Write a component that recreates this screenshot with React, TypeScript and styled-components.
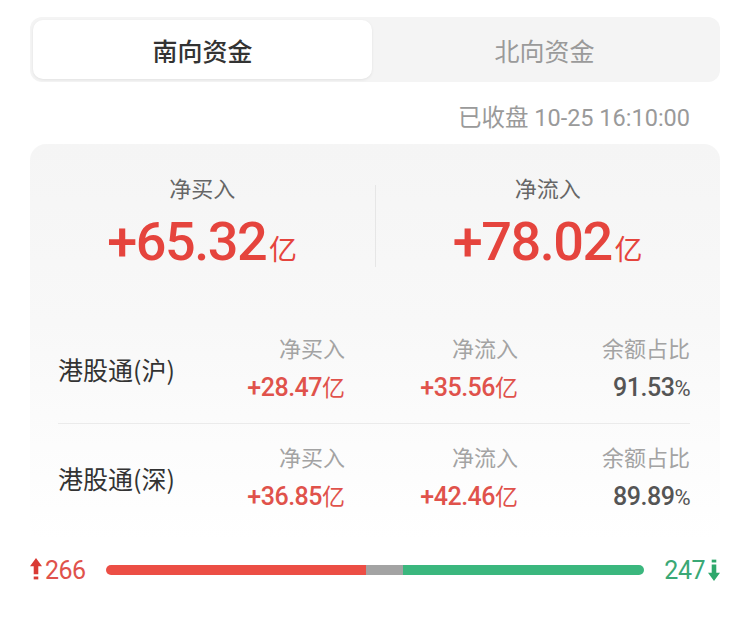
import React from "react";
import styled, { createGlobalStyle } from "styled-components";

const GlobalStyle = createGlobalStyle`
  html, body {
    margin: 0;
    padding: 0;
    background: #ffffff;
  }
  body {
    font-family: "Noto Sans CJK SC", "Noto Sans", sans-serif;
  }
`;

interface StockRow {
  name: string;
  buy: string;
  flow: string;
  ratio: string;
}

const rows: StockRow[] = [
  { name: "港股通(沪)", buy: "+28.47", flow: "+35.56", ratio: "91.53" },
  { name: "港股通(深)", buy: "+36.85", flow: "+42.46", ratio: "89.89" },
];

const NUM_FONT = `Roboto, "Noto Sans CJK SC", sans-serif`;

const App: React.FC = () => {
  const up = 266;
  const flat = 38;
  const down = 247;

  return (
    <>
      <GlobalStyle />
      <StyledPage>
        <StyledTabs>
          <StyledTab $active>南向资金</StyledTab>
          <StyledTab $active={false}>北向资金</StyledTab>
        </StyledTabs>

        <StyledStatus>已收盘 10-25 16:10:00</StyledStatus>

        <StyledCard>
          <StyledSummary>
            <StyledStat>
              <StyledStatLabel>净买入</StyledStatLabel>
              <StyledBigValue>
                +65.32<StyledBigUnit>亿</StyledBigUnit>
              </StyledBigValue>
            </StyledStat>
            <StyledVDivider />
            <StyledStat>
              <StyledStatLabel>净流入</StyledStatLabel>
              <StyledBigValue>
                +78.02<StyledBigUnit>亿</StyledBigUnit>
              </StyledBigValue>
            </StyledStat>
          </StyledSummary>

          <StyledRows>
            {rows.map((row) => (
              <StyledRow key={row.name}>
                <StyledRowName>{row.name}</StyledRowName>
                <StyledCell>
                  <StyledCellLabel>净买入</StyledCellLabel>
                  <StyledCellValue $tone="red">
                    {row.buy}
                    <StyledUnit>亿</StyledUnit>
                  </StyledCellValue>
                </StyledCell>
                <StyledCell>
                  <StyledCellLabel>净流入</StyledCellLabel>
                  <StyledCellValue $tone="red">
                    {row.flow}
                    <StyledUnit>亿</StyledUnit>
                  </StyledCellValue>
                </StyledCell>
                <StyledCell>
                  <StyledCellLabel>余额占比</StyledCellLabel>
                  <StyledCellValue $tone="grey">
                    {row.ratio}
                    <StyledPercent>%</StyledPercent>
                  </StyledCellValue>
                </StyledCell>
              </StyledRow>
            ))}
          </StyledRows>
        </StyledCard>

        <StyledBreadth>
          <StyledCount $tone="up">
            <svg width="12" height="24" viewBox="0 0 11 22">
              <path d="M5.5 0 L11 7.5 L7.6 7.5 L7.6 15 L3.4 15 L3.4 7.5 L0 7.5 Z" fill="#d93a34" />
              <rect x="3.4" y="17" width="4.2" height="2.6" fill="#d93a34" />
            </svg>
            {up}
          </StyledCount>
          <StyledBar>
            <StyledSegment $color="#ec4e45" style={{ flex: up }} />
            <StyledSegment $color="#a3a3a3" style={{ flex: flat }} />
            <StyledSegment $color="#3bb77e" style={{ flex: down }} />
          </StyledBar>
          <StyledCount $tone="down">
            {down}
            <svg width="12" height="24" viewBox="0 0 11 22">
              <rect x="3.4" y="1.5" width="4.2" height="2.6" fill="#2fa86c" />
              <path d="M3.4 6 L7.6 6 L7.6 13.5 L11 13.5 L5.5 21 L0 13.5 L3.4 13.5 Z" fill="#2fa86c" />
            </svg>
          </StyledCount>
        </StyledBreadth>
      </StyledPage>
    </>
  );
};

const StyledPage = styled.div`
  box-sizing: border-box;
  width: 750px;
  padding: 17px 30px 0 30px;
`;

const StyledTabs = styled.div`
  display: grid;
  grid-template-columns: 339px 1fr;
  height: 65px;
  padding: 3px;
  box-sizing: border-box;
  border-radius: 12px;
  background: #f4f4f4;
`;

const StyledTab = styled.div<{ $active: boolean }>`
  display: flex;
  align-items: center;
  justify-content: center;
  border-radius: 10px;
  font-size: 25px;
  font-weight: ${({ $active }) => ($active ? 500 : 400)};
  color: ${({ $active }) => ($active ? "#333333" : "#9a9a9a")};
  background: ${({ $active }) => ($active ? "#ffffff" : "transparent")};
  box-shadow: ${({ $active }) =>
    $active ? "0 1px 3px rgba(0, 0, 0, 0.08)" : "none"};
`;

const StyledStatus = styled.div`
  margin-top: 23px;
  padding-right: 30px;
  height: 26px;
  line-height: 26px;
  text-align: right;
  font-family: ${NUM_FONT};
  font-size: 23.5px;
  color: #9a9a9a;
`;

const StyledCard = styled.div`
  margin-top: 13px;
  border-radius: 16px;
  background: linear-gradient(180deg, #f5f5f5 0%, #f8f8f8 45%, #ffffff 100%);
  padding-bottom: 8px;
`;

const StyledSummary = styled.div`
  display: flex;
  align-items: center;
  padding: 30px 0 37px 0;
`;

const StyledStat = styled.div`
  flex: 1;
  display: flex;
  flex-direction: column;
  align-items: center;
  gap: 12px;
`;

const StyledStatLabel = styled.div`
  font-size: 22px;
  line-height: 26px;
  color: #666666;
`;

const StyledBigValue = styled.div`
  font-family: ${NUM_FONT};
  font-size: 54px;
  line-height: 60px;
  font-weight: 500;
  letter-spacing: -1.5px;
  color: #e5443d;
  display: flex;
  align-items: baseline;
`;

const StyledBigUnit = styled.span`
  font-family: "Noto Sans CJK SC", sans-serif;
  font-size: 28px;
  font-weight: 400;
  letter-spacing: 0;
  margin-left: 3px;
`;

const StyledVDivider = styled.div`
  width: 1px;
  height: 82px;
  background: #e6e6e6;
`;

const StyledRows = styled.div`
  padding: 0 30px 0 28px;
`;

const StyledRow = styled.div`
  display: grid;
  grid-template-columns: 147px 140px 173px 172px;
  align-items: center;
  padding: 19px 0 20px 0;
  & + & {
    border-top: 1px solid #ebebeb;
  }
`;

const StyledRowName = styled.div`
  font-size: 25px;
  line-height: 30px;
  color: #333333;
`;

const StyledCell = styled.div`
  display: flex;
  flex-direction: column;
  align-items: flex-end;
  gap: 13px;
`;

const StyledCellLabel = styled.div`
  font-size: 22px;
  line-height: 26px;
  color: #a3a3a3;
`;

const StyledCellValue = styled.div<{ $tone: "red" | "grey" }>`
  font-family: ${NUM_FONT};
  font-size: 25px;
  line-height: 30px;
  font-weight: 500;
  letter-spacing: -0.5px;
  color: ${({ $tone }) => ($tone === "red" ? "#e0524b" : "#555555")};
`;

const StyledUnit = styled.span`
  font-family: "Noto Sans CJK SC", sans-serif;
  font-weight: 400;
  font-size: 23px;
  line-height: 1;
  letter-spacing: 0;
`;

const StyledPercent = styled.span`
  font-weight: 400;
  font-size: 22px;
  line-height: 1;
`;

const StyledBreadth = styled.div`
  display: flex;
  align-items: center;
  gap: 20px;
  margin-top: 17px;
  height: 26px;
`;

const StyledCount = styled.div<{ $tone: "up" | "down" }>`
  display: flex;
  align-items: center;
  gap: 3px;
  font-family: ${NUM_FONT};
  font-size: 25px;
  letter-spacing: -0.5px;
  color: ${({ $tone }) => ($tone === "up" ? "#e0524b" : "#3aa875")};
`;

const StyledBar = styled.div`
  flex: 1;
  display: flex;
  height: 10px;
  border-radius: 5px;
  overflow: hidden;
`;

const StyledSegment = styled.div<{ $color: string }>`
  height: 100%;
  background: ${({ $color }) => $color};
`;

export default App;
